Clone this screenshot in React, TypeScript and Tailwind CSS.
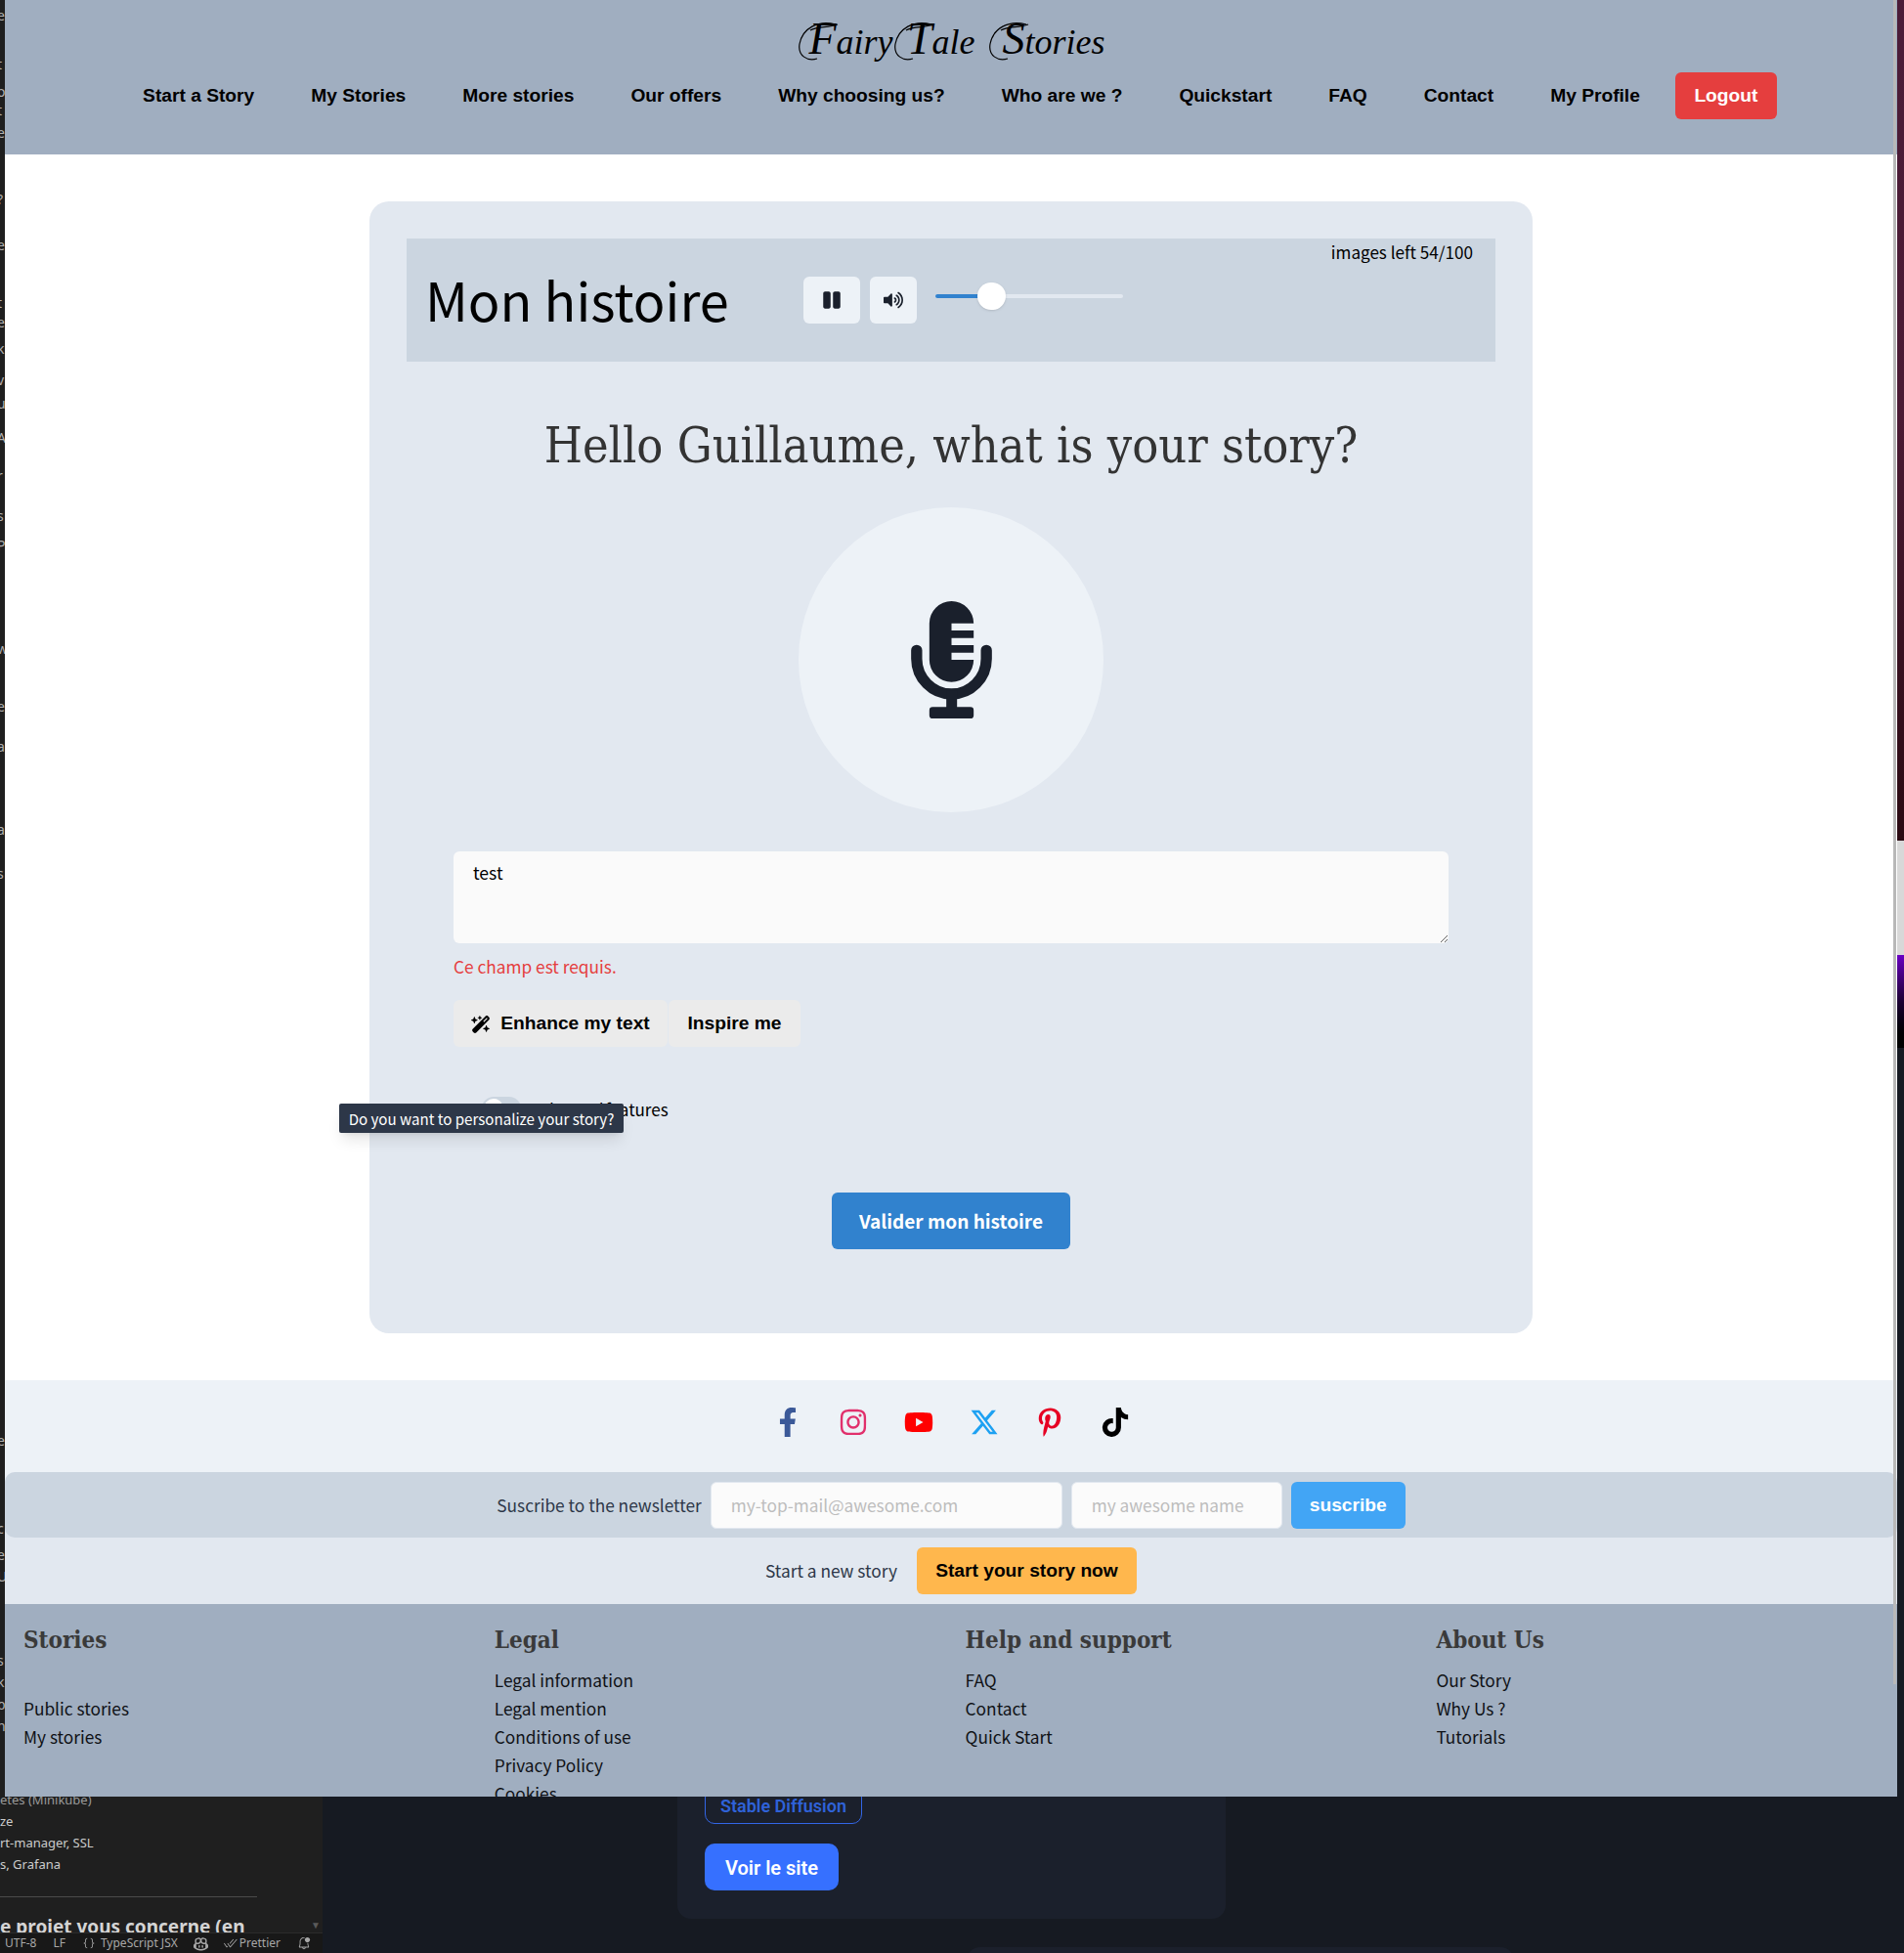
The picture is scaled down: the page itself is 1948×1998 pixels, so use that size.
import { FaFacebookF, FaInstagram, FaPause, FaPinterestP, FaTiktok, FaVolumeUp, FaYoutube } from 'react-icons/fa';
import { FaWandMagicSparkles, FaXTwitter } from 'react-icons/fa6';
import { VscBellDot, VscCheckAll, VscCopilot, VscJson } from 'react-icons/vsc';

const navLinks = ['Start a Story', 'My Stories', 'More stories', 'Our offers', 'Why choosing us?', 'Who are we ?', 'Quickstart', 'FAQ', 'Contact', 'My Profile'];

const footerCols = [
  { title: 'Stories', links: ['', 'Public stories', 'My stories'] },
  { title: 'Legal', links: ['Legal information', 'Legal mention', 'Conditions of use', 'Privacy Policy', 'Cookies'] },
  { title: 'Help and support', links: ['FAQ', 'Contact', 'Quick Start'] },
  { title: 'About Us', links: ['Our Story', 'Why Us ?', 'Tutorials'] },
];

const socials = [
  { Icon: FaFacebookF, color: 'text-[#3b5998]' },
  { Icon: FaInstagram, color: 'text-[#e1306c]' },
  { Icon: FaYoutube, color: 'text-[#ff0000]' },
  { Icon: FaXTwitter, color: 'text-[#1da1f2]' },
  { Icon: FaPinterestP, color: 'text-[#e60023]' },
  { Icon: FaTiktok, color: 'text-black' },
];

// editor text cut off by the window's left edge
const sliver: [number, string][] = [
  [7, 'e'], [57, 't'], [85, 'o'], [104, 't'], [127, 'e'], [195, '?'], [242, 'e'], [301, 't'], [321, 'e'], [348, 'k'],
  [380, 'v'], [404, 'u'], [439, 'A'], [478, 'r'], [519, 's'], [549, 'P'], [655, 'w'], [714, 'e'], [755, 'a'], [779, 'i'],
  [840, 'a'], [885, 's'], [1465, 'e'], [1555, 'c'], [1582, 'e'], [1604, 'U'], [1690, 's'], [1712, 'k'], [1735, 'b'], [1757, 'n'],
];

const MicIcon = () => (
  <svg viewBox="155 75 248 360" className="w-[83px] h-[120px]" fill="#1a202c">
    <path d="M279 75a68 68 0 0 1 68 68h-68v22h68v23h-68v22h68v23h-68v22h68a68 68 0 0 1-136 0V143a68 68 0 0 1 68-68z" />
    <path d="M172 226v26c0 59 48 108 107 108s107-49 107-108v-26" fill="none" stroke="#1a202c" strokeWidth="34" strokeLinecap="round" />
    <rect x="263" y="350" width="33" height="60" />
    <rect x="211" y="400" width="136" height="35" rx="10" />
  </svg>
);

// swash capital of the logo: a real letter with a hand drawn loop behind it
const LogoCap = ({ letter, width }: { letter: string; width: string }) => (
  <span className={`relative inline-block text-right text-[46px] ${width}`}>
    <svg viewBox="0 0 44 44" className="absolute left-0 top-[8px] w-[44px] h-[44px]" fill="none" stroke="black" strokeWidth="1.2">
      <path d="M40 4C22 -1 6 8 3 24c-2 12 8 18 18 15" />
      <path d="M14 10c8-5 18-2 28-6" />
    </svg>
    {letter}
  </span>
);

export default function App() {
  return (
    <div className="relative w-[1948px] h-[1998px] overflow-hidden bg-[#161a22] font-['Noto_Sans_CJK_JP','Noto_Sans',sans-serif]">
      {/* what sits behind the browser window */}
      <div className="absolute left-0 top-0 w-[330px] h-[1998px] bg-[#1f1f1f] text-[#cccccc] font-['Noto_Sans',sans-serif]">
        {sliver.map(([top, ch]) => (
          <span key={top} className="absolute left-[-3px] text-[14px] leading-[18px] text-[#b0b0b0]" style={{ top }}>
            {ch}
          </span>
        ))}
        <div className="absolute top-[1830px] left-0 w-[322px] h-[147px] overflow-hidden text-[13px] leading-[22px] whitespace-nowrap">
          <div className="text-[#9a9a9a]">etes (Minikube)</div>
          <div>ze</div>
          <div>rt-manager, SSL</div>
          <div>s, Grafana</div>
          <div className="mt-[22px] w-[263px] h-px bg-[#4a4a4a]" />
          <div className="mt-[16px] text-[19px] font-bold leading-[28px] text-[#d4d4d4]">e proiet vous concerne (en</div>
        </div>
        <span className="absolute left-[318px] top-[1963px] text-[10px] leading-[12px] text-[#5a5a5a]">▼</span>
        <div className="absolute bottom-0 left-0 right-0 h-[21px] bg-[#181818] border-t border-[#2b2b2b] flex items-center pl-[5px] text-[12px] text-[#a8a8a8] whitespace-nowrap">
          <span>UTF-8</span>
          <span className="ml-[17px]">LF</span>
          <VscJson size={14} className="ml-[17px]" />
          <span className="ml-[5px]">TypeScript JSX</span>
          <VscCopilot size={15} className="ml-[16px]" />
          <VscCheckAll size={14} className="ml-[16px]" />
          <span className="ml-[2px]">Prettier</span>
          <VscBellDot size={14} className="ml-[17px]" />
        </div>
      </div>
      <div className="absolute left-[1941px] top-0 w-[7px] h-[860px] bg-linear-to-b from-[#4b1c38] via-[#4a1a33] to-[#2a0a12]" />
      <div className="absolute left-[1941px] top-[860px] w-[7px] h-[117px] bg-[#d8d8d8]" />
      <div className="absolute left-[1941px] top-[977px] w-[7px] h-[95px] bg-linear-to-b from-[#6a00c4] via-[#1c0033] to-black" />
      <div className="absolute left-[693px] top-[1780px] w-[561px] h-[183px] rounded-[14px] bg-[#1b202c] font-['Roboto',sans-serif]">
        <div className="absolute left-[28px] top-[49px] w-[161px] h-[37px] rounded-[10px] border border-[#3366e6] flex items-center justify-center text-[18px] font-semibold text-[#2f62d8]">Stable Diffusion</div>
        <div className="absolute left-[28px] top-[106px] w-[137px] h-[48px] rounded-[10px] bg-[#3670ff] flex items-center justify-center pt-[1px] text-[20px] font-semibold text-white">Voir le site</div>
      </div>
      <div className="absolute left-[989px] top-[1992px] w-[560px] h-[40px] rounded-[14px] bg-[#1b202c]" />

      {/* browser window */}
      <div className="absolute left-[5px] top-0 w-[1936px] h-[1838px] overflow-hidden bg-white flex flex-col">
        <header className="h-[158px] shrink-0 bg-[#a0aec0] flex flex-col items-center">
          <div className="h-[74px] pt-[13px] flex items-baseline font-['Liberation_Serif',serif] italic text-[36px] leading-[54px] text-black whitespace-nowrap">
            <LogoCap letter="F" width="w-[40px]" />
            <span className="w-[58px]">airy</span>
            <LogoCap letter="T" width="w-[40px]" />
            <span className="w-[57px]">ale</span>
            <LogoCap letter="S" width="w-[38px]" />
            <span>tories</span>
          </div>
          <nav className="ml-[18px] flex items-center gap-[58px] h-[48px] font-['Liberation_Sans',sans-serif] font-bold text-[19.2px] text-black whitespace-nowrap">
            {navLinks.map((link) => (
              <span key={link} className="pt-[1px]">{link}</span>
            ))}
            <span className="-ml-[22px] w-[104px] h-[48px] rounded-[6px] bg-[#e53e3e] text-white flex items-center justify-center pt-[1px]">Logout</span>
          </nav>
        </header>

        <main className="h-[1254px] shrink-0 pt-[48px]">
          <div className="relative ml-[373px] w-[1190px] h-[1158px] rounded-[20px] bg-[#e2e8f0] pt-[38px] px-[38px]">
            <div className="relative h-[126px] bg-[#cbd5e0] flex items-center pl-[19px]">
              <h1 className="w-[387px] -mt-[2px] text-[54px] leading-none text-black">Mon histoire</h1>
              <button className="w-[58px] h-[48px] rounded-[6px] bg-[#edf2f7] flex items-center justify-center text-[#1a202c]">
                <FaPause size={20} />
              </button>
              <button className="ml-[10px] w-[48px] h-[48px] rounded-[6px] bg-[#edf2f7] flex items-center justify-center text-[#1a202c]">
                <FaVolumeUp size={20} />
              </button>
              <div className="relative ml-[19px] -mt-[8px] w-[192px] h-[4px] rounded-full bg-[#e2e8f0]">
                <div className="w-[57px] h-[4px] rounded-l-full bg-[#3182ce]" />
                <div className="absolute left-[43px] -top-[12px] w-[29px] h-[28px] rounded-full bg-white shadow" />
              </div>
              <span className="absolute right-[23px] top-[0px] text-[17.1px] leading-[27px] text-black">images left 54/100</span>
            </div>

            <h2 className="mt-[58px] text-center font-['DejaVu_Serif_Condensed','DejaVu_Serif',serif] text-[50px] leading-[56px] text-[#333333]">Hello Guillaume, what is your story?</h2>

            <div className="mt-[35px] mx-auto w-[312px] h-[312px] rounded-full bg-[#edf2f7] flex items-center justify-center">
              <MicIcon />
            </div>

            <div className="mt-[40px] mx-[48px]">
              <textarea
                readOnly
                value="test"
                className="block w-[1018px] h-[94px] rounded-[6px] bg-[#fafafa] px-[20px] py-[8px] text-[17.6px] leading-[27px] text-black outline-none"
              />
              <p className="mt-[10px] text-[17.3px] leading-[27px] text-[#e53e3e]">Ce champ est requis.</p>
              <div className="mt-[21px] flex gap-[1px] font-['Liberation_Sans',sans-serif] font-bold text-[19.2px] text-black">
                <button className="w-[219px] h-[48px] rounded-[6px] bg-[#ebebeb] flex items-center justify-center gap-[10px] pt-[1px]">
                  <FaWandMagicSparkles size={20} />
                  Enhance my text
                </button>
                <button className="w-[135px] h-[48px] rounded-[6px] bg-[#ebebeb] pt-[1px]">Inspire me</button>
              </div>
              <div className="mt-[47px] ml-[29px] flex items-center gap-[14px] h-[32px]">
                <div className="w-[40px] h-[24px] rounded-full bg-[#cbd5e0] p-[2px]">
                  <div className="w-[20px] h-[20px] rounded-full bg-white" />
                </div>
                <span className="text-[17px] leading-[27px] text-black whitespace-pre">
                  <span className="tracking-[-1px]">Advanced </span>features
                </span>
              </div>
            </div>

            <div className="absolute left-[-31px] top-[923px] w-[291px] h-[30px] rounded-[2px] bg-[#2d3748] text-white text-[15.1px] leading-[30px] text-center shadow-lg whitespace-nowrap">
              Do you want to personalize your story?
            </div>

            <button className="absolute left-[473px] top-[1014px] w-[244px] h-[58px] rounded-[6px] bg-[#3182ce] text-white font-semibold text-[19px]">Valider mon histoire</button>
          </div>
        </main>

        <div className="h-[94px] shrink-0 bg-[#edf2f7] flex items-center justify-center gap-[37px] pb-[8px]">
          {socials.map(({ Icon, color }, i) => (
            <Icon key={i} size={30} className={color} />
          ))}
        </div>

        <div className="h-[67px] shrink-0 bg-linear-to-b from-[#edf2f7] to-[#e2e8f0]">
          <div className="h-full rounded-[10px] bg-[#cbd5e0] flex items-center justify-center gap-[9px] text-[17.3px] text-[#2d3748]">
            <span>Suscribe to the newsletter</span>
            <div className="w-[360px] h-[48px] rounded-[6px] bg-[#fbfbfb] border border-[#e2e8f0] flex items-center px-[20px] text-[#bdbdbd]">my-top-mail@awesome.com</div>
            <div className="w-[216px] h-[48px] rounded-[6px] bg-[#fbfbfb] border border-[#e2e8f0] flex items-center px-[20px] text-[#bdbdbd]">my awesome name</div>
            <button className="w-[117px] h-[48px] rounded-[6px] bg-[#42a5f5] text-white font-['Liberation_Sans',sans-serif] font-bold text-[19.2px] pt-[1px]">suscribe</button>
          </div>
        </div>

        <div className="h-[68px] shrink-0 bg-[#e2e8f0] flex items-center justify-center gap-[20px] text-[17.3px] text-[#2d3748]">
          <span>Start a new story</span>
          <button className="w-[225px] h-[48px] rounded-[6px] bg-[#ffb74d] text-black font-['Liberation_Sans',sans-serif] font-bold text-[19.2px] pt-[1px]">Start your story now</button>
        </div>

        <footer className="flex-1 bg-[#a0aec0] grid grid-cols-[repeat(4,481.8px)] pl-[19px] pt-[20px] overflow-hidden">
          {footerCols.map((col) => (
            <div key={col.title}>
              <h3 className="font-['DejaVu_Serif_Condensed','DejaVu_Serif',serif] font-bold text-[24px] leading-[34px] text-[#3a3a3a]">{col.title}</h3>
              <ul className="mt-[9px] text-[17.3px] leading-[29px] text-[#0f1115]">
                {col.links.map((link, i) => (
                  <li key={i} className="h-[29px]">{link}</li>
                ))}
              </ul>
            </div>
          ))}
        </footer>

        {/* page scrollbar */}
        <div className="absolute right-[1px] top-0 w-[3px] h-[1723px] bg-[#b8b8b8]" />
      </div>
    </div>
  );
}
